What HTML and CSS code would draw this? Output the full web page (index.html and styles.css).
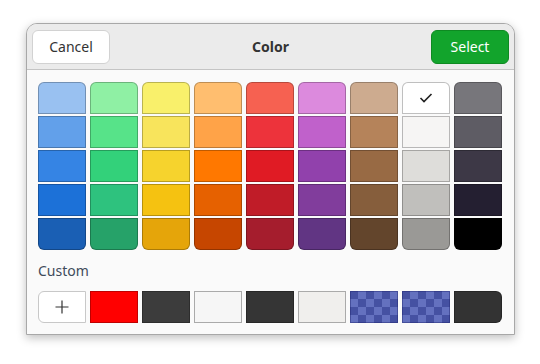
FILE: index.html
```html
<!DOCTYPE html>
<html lang="en">

<head>
    <meta charset="UTF-8">
    <link rel="stylesheet" href="styles.css">
</head>

<body>
    <div class="dialog">
        <div class="header">
            <button class="btn btn-cancel">Cancel</button>
            <span class="title">Color</span>
            <button class="btn btn-select">Select</button>
        </div>
        <div class="content">
            <div class="palette">
                <div class="column">
                    <div class="swatch" style="background:#99c1f1"></div>
                    <div class="swatch" style="background:#62a0ea"></div>
                    <div class="swatch" style="background:#3584e4"></div>
                    <div class="swatch" style="background:#1c71d8"></div>
                    <div class="swatch" style="background:#1a5fb4"></div>
                </div>
                <div class="column">
                    <div class="swatch" style="background:#8ff0a4"></div>
                    <div class="swatch" style="background:#57e389"></div>
                    <div class="swatch" style="background:#33d17a"></div>
                    <div class="swatch" style="background:#2ec27e"></div>
                    <div class="swatch" style="background:#26a269"></div>
                </div>
                <div class="column">
                    <div class="swatch" style="background:#f9f06b"></div>
                    <div class="swatch" style="background:#f8e45c"></div>
                    <div class="swatch" style="background:#f6d32d"></div>
                    <div class="swatch" style="background:#f5c211"></div>
                    <div class="swatch" style="background:#e5a50a"></div>
                </div>
                <div class="column">
                    <div class="swatch" style="background:#ffbe6f"></div>
                    <div class="swatch" style="background:#ffa348"></div>
                    <div class="swatch" style="background:#ff7800"></div>
                    <div class="swatch" style="background:#e66100"></div>
                    <div class="swatch" style="background:#c64600"></div>
                </div>
                <div class="column">
                    <div class="swatch" style="background:#f66151"></div>
                    <div class="swatch" style="background:#ed333b"></div>
                    <div class="swatch" style="background:#e01b24"></div>
                    <div class="swatch" style="background:#c01c28"></div>
                    <div class="swatch" style="background:#a51d2d"></div>
                </div>
                <div class="column">
                    <div class="swatch" style="background:#dc8add"></div>
                    <div class="swatch" style="background:#c061cb"></div>
                    <div class="swatch" style="background:#9141ac"></div>
                    <div class="swatch" style="background:#813d9c"></div>
                    <div class="swatch" style="background:#613583"></div>
                </div>
                <div class="column">
                    <div class="swatch" style="background:#cdab8f"></div>
                    <div class="swatch" style="background:#b5835a"></div>
                    <div class="swatch" style="background:#986a44"></div>
                    <div class="swatch" style="background:#865e3c"></div>
                    <div class="swatch" style="background:#63452c"></div>
                </div>
                <div class="column">
                    <div class="swatch swatch-selected" style="background:#ffffff">
                        <svg width="14" height="14" viewBox="0 0 14 14">
                            <polyline points="1.5,7 5,10.5 12.5,3" fill="none" stroke="#222" stroke-width="1.6" />
                        </svg>
                    </div>
                    <div class="swatch" style="background:#f6f5f4"></div>
                    <div class="swatch" style="background:#deddda"></div>
                    <div class="swatch" style="background:#c0bfbc"></div>
                    <div class="swatch" style="background:#9a9996"></div>
                </div>
                <div class="column">
                    <div class="swatch" style="background:#77767b"></div>
                    <div class="swatch" style="background:#5e5c64"></div>
                    <div class="swatch" style="background:#3d3846"></div>
                    <div class="swatch" style="background:#241f31"></div>
                    <div class="swatch" style="background:#000000"></div>
                </div>
            </div>

            <div class="custom-label">Custom</div>

            <div class="custom-row">
                <div class="swatch custom-add">
                    <svg width="14" height="14" viewBox="0 0 14 14">
                        <path d="M7 0.5V13.5M0.5 7H13.5" stroke="#333" stroke-width="1.2" />
                    </svg>
                </div>
                <div class="swatch" style="background:#ff0000"></div>
                <div class="swatch" style="background:#3c3c3c"></div>
                <div class="swatch swatch-light" style="background:#f6f6f6"></div>
                <div class="swatch" style="background:#353535"></div>
                <div class="swatch swatch-light" style="background:#f0efed"></div>
                <div class="swatch swatch-checker"></div>
                <div class="swatch swatch-checker"></div>
                <div class="swatch custom-last" style="background:#333333"></div>
            </div>
        </div>
    </div>
</body>

</html>
```

FILE: styles.css
```css
body {
    margin: 0;
    padding: 23px 26px;
    background-color: #ffffff;
    font-family: 'Noto Sans', 'Open Sans', sans-serif;
}

.dialog {
    width: 487px;
    border: 1px solid #a8a8a8;
    border-radius: 11px 11px 0 0;
    background-color: #fafafa;
    box-shadow: 0 3px 10px rgba(0, 0, 0, 0.25);
    overflow: hidden;
}

.header {
    display: flex;
    align-items: center;
    justify-content: space-between;
    height: 45px;
    padding: 0 5px;
    background-color: #ebebeb;
    border-bottom: 1px solid #c4c4c4;
}

.btn {
    width: 78px;
    height: 34px;
    border-radius: 6px;
    font-family: 'Noto Sans', 'Open Sans', sans-serif;
    font-size: 14px;
    cursor: pointer;
}

.btn-cancel {
    background-color: #ffffff;
    border: 1px solid #d2d2d2;
    color: #333333;
}

.btn-select {
    background-color: #12a42c;
    border: 1px solid #0e8a22;
    color: #ffffff;
}

.title {
    font-weight: bold;
    font-size: 14px;
    color: #333333;
}

.content {
    padding: 12px 11px 11px 11px;
}

.palette {
    display: flex;
    gap: 4px;
}

.column {
    display: flex;
    flex-direction: column;
    gap: 2px;
}

.swatch {
    box-sizing: border-box;
    width: 48px;
    height: 32px;
    border: 1px solid rgba(0, 0, 0, 0.25);
    display: flex;
    align-items: center;
    justify-content: center;
}

.column .swatch:first-child {
    border-radius: 6px 6px 0 0;
}

.column .swatch:last-child {
    border-radius: 0 0 6px 6px;
}

.custom-label {
    margin: 11px 0 0 0;
    height: 19px;
    font-size: 14px;
    color: #404b5a;
}

.custom-row {
    display: flex;
    gap: 4px;
    margin-top: 11px;
}

.custom-add {
    background-color: #ffffff;
    border-color: #c8c8c8;
    border-radius: 6px 0 0 6px;
}

.custom-last {
    border-radius: 0 6px 6px 0;
}

.swatch-light {
    border-color: #aaaaaa;
}

.swatch-checker {
    border-color: rgba(30, 38, 110, 0.45);
    background: repeating-conic-gradient(#6471bf 0 25%, #4551a2 0 50%) 0 0 / 16px 16px;
    background-origin: border-box;
}
```
